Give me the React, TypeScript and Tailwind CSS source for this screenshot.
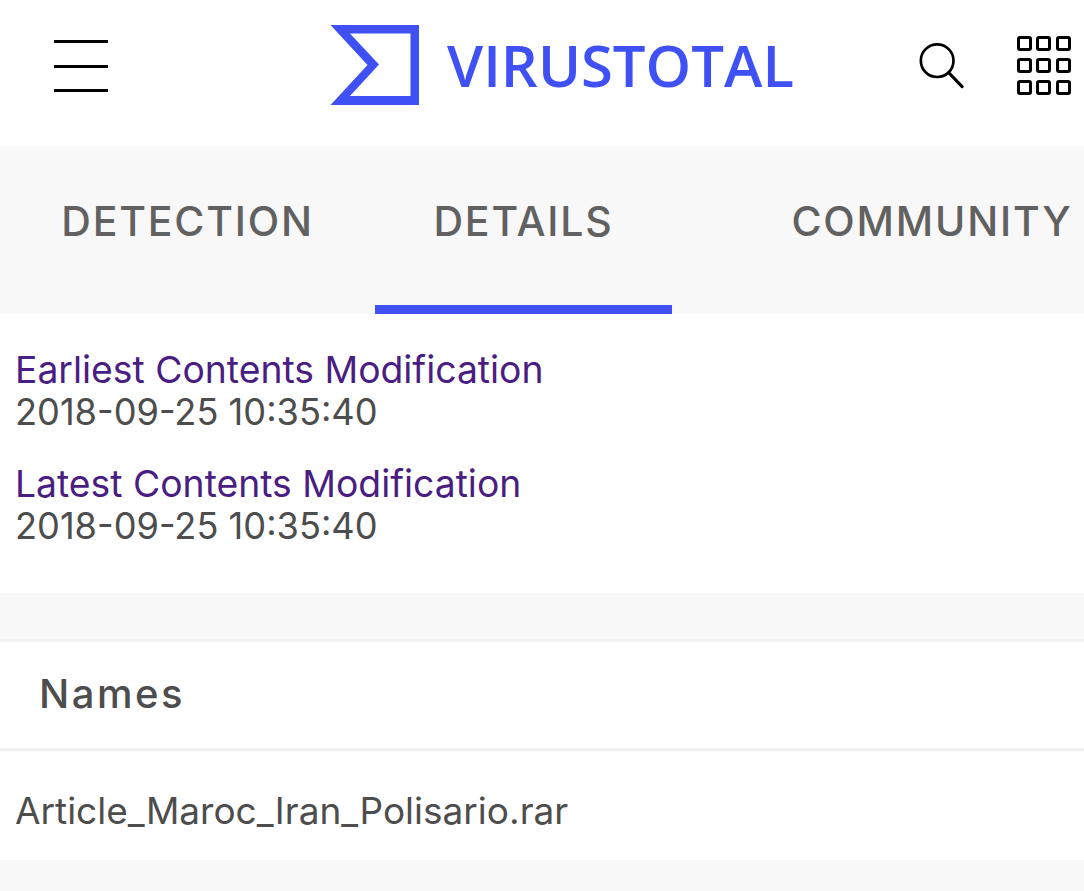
const sans = 'font-["Inter",sans-serif]'

function Logo() {
  return (
    <svg width="90" height="82" viewBox="0 0 90 82" className="shrink-0">
      <path fillRule="evenodd" fill="#3f51f5" d="M0.5 1H89V81H0.5L37.5 41ZM20 9.5L49 40.5 20 72H80.5V9.5Z" />
    </svg>
  )
}

function Tab({ label, active, className }: { label: string; active?: boolean; className: string }) {
  return (
    <div className={`relative flex h-full items-center justify-center pb-[16px] ${className}`}>
      <span className="text-[41px] font-medium tracking-[1.8px] text-[#616161]">{label}</span>
      {active && <div className="absolute right-0 bottom-0 left-0 h-[9px] bg-[#3f51f5]" />}
    </div>
  )
}

function Field({ label, value }: { label: string; value: string }) {
  return (
    <div className="leading-[42px]">
      <div className="text-[37.3px] text-[#4a1d82]">{label}</div>
      <div className="text-[36.2px] text-[#4d4d4d]">{value}</div>
    </div>
  )
}

export default function App() {
  return (
    <div className={`flex h-[891px] w-[1084px] flex-col overflow-hidden bg-white ${sans}`}>
      <header className="relative flex h-[146px] shrink-0 items-center pb-[16px] pl-[54px]">
        <div className="mt-[2px] flex h-[52px] w-[54px] flex-col justify-between">
          <div className="h-[3px] bg-black" />
          <div className="h-[3px] bg-black" />
          <div className="h-[3px] bg-black" />
        </div>
        <div className="ml-[222px] flex items-center">
          <Logo />
          <span className="ml-[27px] font-['Open_Sans',sans-serif] text-[58px] leading-none font-semibold text-[#3f51f5]">VIRUSTOTAL</span>
        </div>
        <svg width="48" height="48" viewBox="0 0 50 50" fill="none" stroke="black" className="ml-[123px] shrink-0">
          <circle cx="21" cy="20.5" r="17" strokeWidth="2.8" />
          <path d="M33 33L47 47.5" strokeWidth="3.2" strokeLinecap="round" />
        </svg>
        <div className="ml-[52px] grid shrink-0 grid-cols-[repeat(3,15px)] gap-x-[4.5px] gap-y-[7px]">
          {Array.from({ length: 9 }).map((_, i) => (
            <div key={i} className="h-[15px] rounded-[3px] border-[3px] border-black" />
          ))}
        </div>
      </header>

      <nav className="flex h-[168px] shrink-0 bg-[#f8f8f8]">
        <Tab label="DETECTION" className="w-[375px]" />
        <Tab label="DETAILS" active className="w-[297px]" />
        <Tab label="COMMUNITY" className="ml-[120px] w-[280px]" />
      </nav>

      <section className="flex h-[279px] shrink-0 flex-col gap-[30px] pt-[35px] pl-[15px]">
        <Field label="Earliest Contents Modification" value="2018-09-25 10:35:40" />
        <Field label="Latest Contents Modification" value="2018-09-25 10:35:40" />
      </section>

      <div className="h-[46px] shrink-0 bg-[#f8f8f8]" />

      <div className="flex h-[112px] shrink-0 items-center border-y-[3px] border-y-[#f2f2f2] pb-[2px] pl-[39px] text-[40px] font-medium tracking-[2.5px] text-[#4d4d4d]">
        Names
      </div>

      <div className="flex h-[109px] shrink-0 items-center pt-[10px] pl-[15px] text-[37px] text-[#4d4d4d]">
        Article_Maroc_Iran_Polisario.rar
      </div>

      <div className="flex-1 bg-[#f8f8f8]" />
    </div>
  )
}
